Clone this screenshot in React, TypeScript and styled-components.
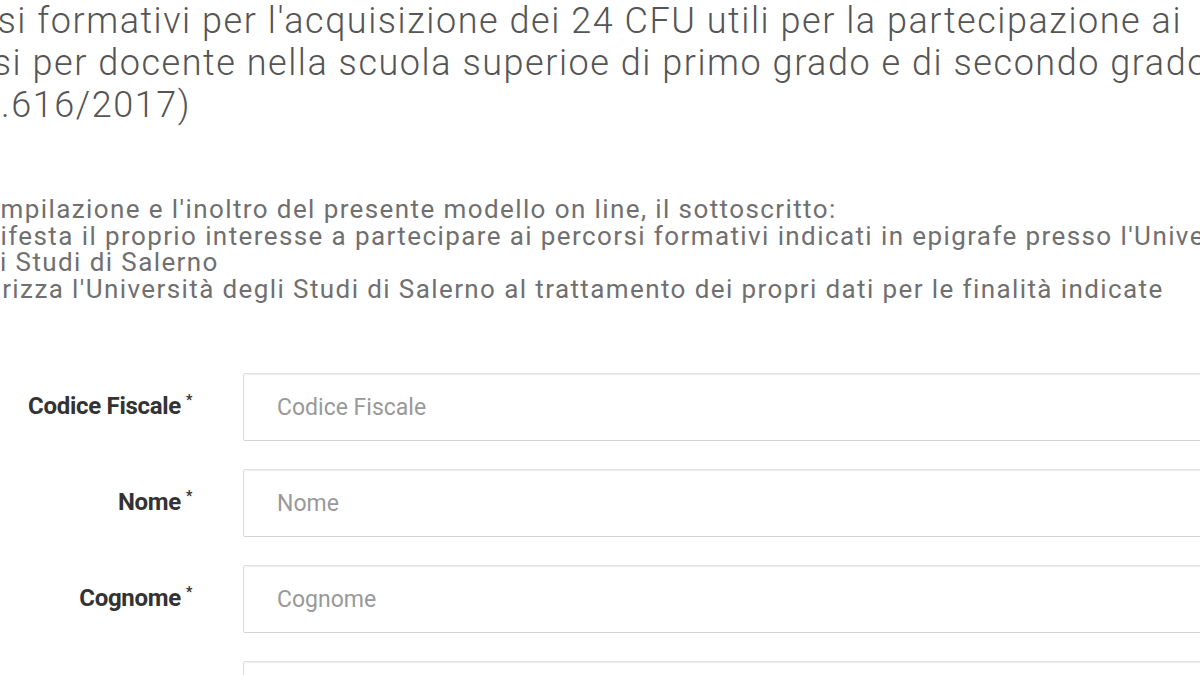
import { createGlobalStyle, styled } from "styled-components";

const GlobalStyle = createGlobalStyle`
  html, body {
    margin: 0;
    padding: 0;
    background: #fff;
    overflow: hidden;
  }
  body {
    font-family: Roboto, "Liberation Sans", Arial, sans-serif;
  }
`;

const Page = styled.div`
  display: flex;
  flex-direction: column;
  width: 1200px;
  height: 675px;
  overflow: hidden;
`;

const Title = styled.h1`
  margin: 0;
  font-size: 36px;
  font-weight: 300;
  line-height: 42px;
  letter-spacing: 1.55px;
  color: #555;
  white-space: nowrap;
`;

// the screenshot is a crop, each line starts a bit off the left edge
const TitleLine = styled.span<{ $shift: number }>`
  display: block;
  margin-left: ${(p) => -p.$shift}px;
`;

const Intro = styled.div`
  margin: 70px 0 0 -120px;
  font-size: 26px;
  line-height: 26.5px;
  letter-spacing: 1.4px;
  color: #707070;
  white-space: nowrap;
`;

const Lead = styled.p`
  margin: 0;
`;

const Points = styled.ul`
  margin: 0;
  padding-left: 65px;
  list-style: none;
`;

const Form = styled.form`
  display: flex;
  flex-direction: column;
  gap: 28px;
  margin-top: 71px;
`;

const Row = styled.div`
  display: grid;
  grid-template-columns: 200px 1100px;
  column-gap: 43px;
  align-items: center;
`;

const Label = styled.label`
  padding-right: 8px;
  text-align: right;
  font-size: 24px;
  font-weight: 700;
  color: #333;
  letter-spacing: -0.3px;
  margin-top: -2px;
`;

const Required = styled.sup`
  font-size: 14px;
  margin-left: 5px;
  vertical-align: 9px;
`;

const Field = styled.input`
  box-sizing: border-box;
  height: 68px;
  width: 100%;
  padding: 0 33px;
  border: 1px solid #ddd;
  border-bottom-color: #d2d2d2;
  border-radius: 2px;
  box-shadow: inset 0 1px 2px rgba(0, 0, 0, 0.07);
  font-family: inherit;
  font-size: 23px;
  color: #555;
  background: #fff;
  outline: none;

  &::placeholder {
    color: #999;
  }
`;

const fields = [
  { id: "cf", label: "Codice Fiscale" },
  { id: "nome", label: "Nome" },
  { id: "cognome", label: "Cognome" },
  { id: "nascita", label: "Data di nascita" },
];

const App = () => {
  return (
    <Page>
      <GlobalStyle />
      <Title>
        <TitleLine $shift={115}>
          Percorsi formativi per l'acquisizione dei 24 CFU utili per la partecipazione ai
        </TitleLine>
        <TitleLine $shift={126}>
          concorsi per docente nella scuola superioe di primo grado e di secondo grado
        </TitleLine>
        <TitleLine $shift={120}>(D.M. n.616/2017)</TitleLine>
      </Title>

      <Intro>
        <Lead>
          Con la compilazione e l'inoltro del presente modello on line, il sottoscritto:
        </Lead>
        <Points>
          <li>
            manifesta il proprio interesse a partecipare ai percorsi formativi indicati in epigrafe presso l'Università
            <br />
            degli Studi di Salerno
          </li>
          <li>
            autorizza l'Università degli Studi di Salerno al trattamento dei propri dati per le finalità indicate
          </li>
        </Points>
      </Intro>

      <Form>
        {fields.map((field) => (
          <Row key={field.id}>
            <Label htmlFor={field.id}>
              {field.label}
              <Required>*</Required>
            </Label>
            <Field id={field.id} placeholder={field.label} />
          </Row>
        ))}
      </Form>
    </Page>
  );
};

export default App;
